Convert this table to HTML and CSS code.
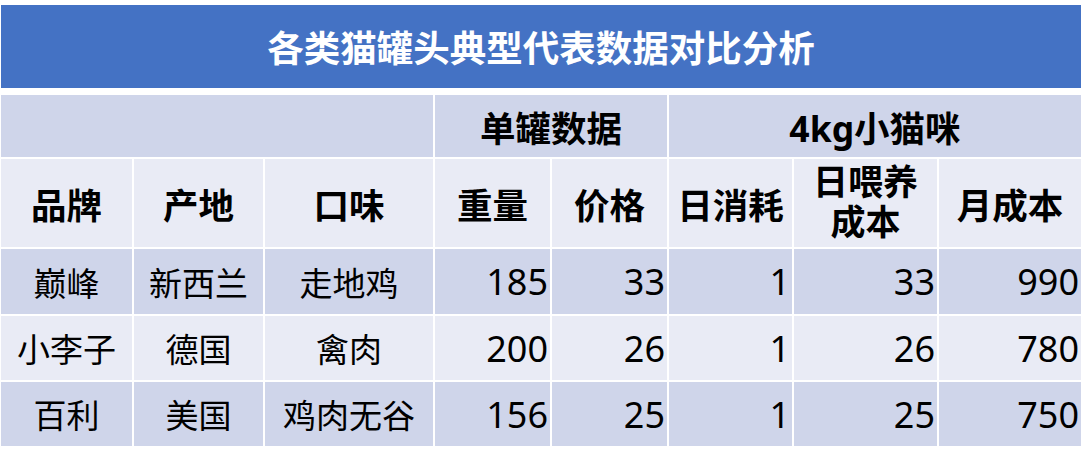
FILE: index.html
```html
<!DOCTYPE html>
<html lang="zh-CN">
<head>
<meta charset="utf-8">
<title>各类猫罐头典型代表数据对比分析</title>
<link rel="stylesheet" href="styles.css">
</head>
<body>
<div class="page">
  <div class="title">各类猫罐头典型代表数据对比分析</div>
  <div class="table">
    <div class="cell h1 span3"></div>
    <div class="cell h1 span2">单罐数据</div>
    <div class="cell h1 span3">4kg小猫咪</div>

    <div class="cell h2">品牌</div>
    <div class="cell h2">产地</div>
    <div class="cell h2">口味</div>
    <div class="cell h2">重量</div>
    <div class="cell h2">价格</div>
    <div class="cell h2">日消耗</div>
    <div class="cell h2 two"><span class="line">日喂养</span><span class="line">成本</span></div>
    <div class="cell h2">月成本</div>

    <div class="cell d dark">巅峰</div>
    <div class="cell d dark">新西兰</div>
    <div class="cell d dark">走地鸡</div>
    <div class="cell d dark num">185</div>
    <div class="cell d dark num">33</div>
    <div class="cell d dark num">1</div>
    <div class="cell d dark num">33</div>
    <div class="cell d dark num">990</div>

    <div class="cell d light">小李子</div>
    <div class="cell d light">德国</div>
    <div class="cell d light">禽肉</div>
    <div class="cell d light num">200</div>
    <div class="cell d light num">26</div>
    <div class="cell d light num">1</div>
    <div class="cell d light num">26</div>
    <div class="cell d light num">780</div>

    <div class="cell d dark">百利</div>
    <div class="cell d dark">美国</div>
    <div class="cell d dark">鸡肉无谷</div>
    <div class="cell d dark num">156</div>
    <div class="cell d dark num">25</div>
    <div class="cell d dark num">1</div>
    <div class="cell d dark num">25</div>
    <div class="cell d dark num">750</div>
  </div>
</div>
</body>
</html>
```

FILE: styles.css
```css
html, body {
  margin: 0;
  padding: 0;
  background: #ffffff;
}

body {
  font-family: "Noto Sans", "Noto Sans CJK SC", sans-serif;
  color: #000000;
}

.page {
  padding: 5px 0 0 1px;
  width: 1080px;
}

.title {
  height: 83px;
  background: #4472c4;
  color: #ffffff;
  font-family: "Noto Sans CJK SC", sans-serif;
  font-weight: 700;
  font-size: 36.5px;
  display: flex;
  align-items: center;
  justify-content: center;
  margin-bottom: 7px;
}

.table {
  display: grid;
  grid-template-columns: 131px 129px 168px 115px 115px 123px 143px 142px;
  grid-template-rows: 62px 88px 65px 64px 64px;
  gap: 2px;
}

.cell {
  display: flex;
  align-items: center;
  justify-content: center;
  font-family: "Noto Sans", "Noto Sans CJK SC", sans-serif;
}

.h1 {
  background: #cfd5ea;
  font-weight: 700;
  font-size: 35.5px;
}

.span3 { grid-column: span 3; }
.span2 { grid-column: span 2; }

.h2 {
  background: #e9ebf5;
  font-weight: 700;
  font-size: 35.5px;
  text-align: center;
}

.two {
  flex-direction: column;
}

.line {
  display: block;
  height: 40px;
  line-height: 40px;
  font-family: "Liberation Sans", "Noto Sans CJK SC", sans-serif;
  font-size: 35px;
}

.d {
  font-size: 33px;
}

.dark { background: #cfd5ea; }
.light { background: #e9ebf5; }

.num {
  justify-content: flex-end;
  padding-right: 2px;
  font-size: 36px;
}
```
